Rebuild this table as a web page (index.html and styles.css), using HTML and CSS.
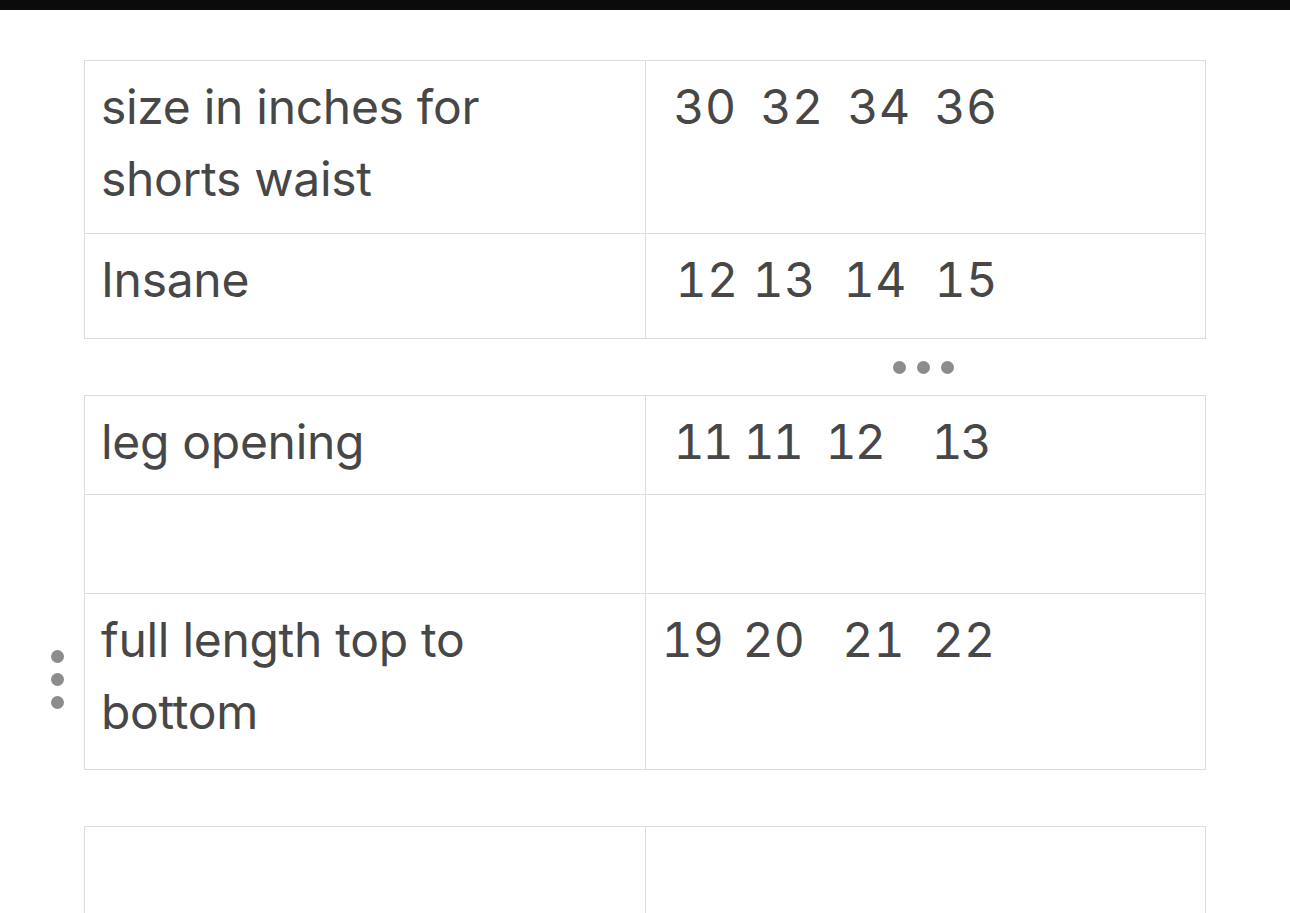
FILE: index.html
```html
<!DOCTYPE html>
<html lang="en">
<head>
<meta charset="utf-8">
<title>Size chart</title>
<link rel="stylesheet" href="styles.css">
</head>
<body>
<div class="topbar"></div>
<main class="page">
  <table class="grid">
    <tr class="r173"><td>size in inches for shorts waist</td><td class="num sp-a"> 30  32  34  36</td></tr>
    <tr class="r105"><td>Insane</td><td class="num sp-b"> 12 13  14  15</td></tr>
  </table>
  <div class="gap">
    <div></div>
    <div class="hdots"><span></span><span></span><span></span></div>
  </div>
  <table class="grid">
    <tr class="r99"><td>leg opening</td><td class="num sp-c"> 11 11  12    13</td></tr>
    <tr class="r99"><td></td><td></td></tr>
    <tr class="r176"><td><div class="handle-wrap"><div class="vdots"><span></span><span></span><span></span></div>full length top to bottom</div></td><td class="num sp-d">19  20    21   22</td></tr>
  </table>
  <div class="gap"></div>
  <table class="grid">
    <tr class="r176"><td></td><td></td></tr>
  </table>
</main>
</body>
</html>
```

FILE: styles.css
```css
html, body {
  margin: 0;
  padding: 0;
  background: #ffffff;
}
body {
  font-family: Inter, "Noto Sans", "Liberation Sans", sans-serif;
  color: #474747;
  overflow: hidden;
  height: 913px;
}
.topbar {
  height: 10px;
  background: #0b0b0b;
}
.page {
  padding: 50px 84px 0 84px;
  width: 1122px;
}
.grid {
  border-collapse: collapse;
  width: 1122px;
  table-layout: fixed;
}
.grid td {
  border: 1px solid #dcdcdc;
  vertical-align: top;
  padding: 10px 16px 0 16px;
  font-size: 48px;
  line-height: 72px;
  letter-spacing: -0.3px;
}
.grid td.num {
  white-space: pre-wrap;
  font-variant-numeric: tabular-nums;
}
.grid td.sp-a { letter-spacing: 0.5px; word-spacing: -1.5px; }
.grid td.sp-b { letter-spacing: 0.5px; word-spacing: 0.5px; }
.grid td.sp-c { letter-spacing: -2px; word-spacing: 1px; }
.grid td.sp-d { letter-spacing: 0; word-spacing: -3.5px; }
.r173 { height: 173px; }
.r105 { height: 105px; }
.r99 { height: 99px; }
.r176 { height: 176px; }
.gap {
  height: 56px;
  display: grid;
  grid-template-columns: 1fr 1fr;
  align-items: center;
}
.hdots {
  display: flex;
  justify-content: center;
  gap: 11px;
  padding-right: 4px;
}
.hdots span, .vdots span {
  width: 13px;
  height: 13px;
  border-radius: 50%;
  background: #8c8c8c;
  display: block;
}
.handle-wrap {
  position: relative;
}
.vdots {
  position: absolute;
  left: -50px;
  top: 46px;
  display: flex;
  flex-direction: column;
  gap: 10px;
}
```
